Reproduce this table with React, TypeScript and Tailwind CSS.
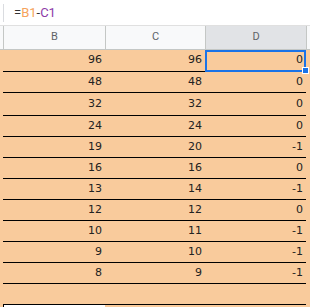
import React from 'react'

const ROWS: [number, number, number][] = [
  [96, 96, 0],
  [48, 48, 0],
  [32, 32, 0],
  [24, 24, 0],
  [19, 20, -1],
  [16, 16, 0],
  [13, 14, -1],
  [12, 12, 0],
  [10, 11, -1],
  [9, 10, -1],
  [8, 9, -1]
]

// row heights include the 1px black rule at the bottom
const HEIGHTS = ['h-[22px]', 'h-[21px]', 'h-[23px]', 'h-[21px]', 'h-[21px]', 'h-[21px]', 'h-[21px]', 'h-[21px]', 'h-[21px]', 'h-[21px]', 'h-[21px]']

const DataRow = ({ cells, h }: { cells: (number | null)[]; h: string }) => (
  <div className={`flex ${h} bg-[#f9cb9c]`}>
    <div className="w-[3px] shrink-0" />
    <div className="flex border-b border-black">
      <div className="flex justify-end items-center pr-[3px] w-[102px]">{cells[0]}</div>
      <div className="flex justify-end items-center pr-[3px] w-[100px]">{cells[1]}</div>
      <div className="flex justify-end items-center pr-[3px] w-[101px]">{cells[2]}</div>
    </div>
    <div className="flex-1" />
  </div>
)

export default function App() {
  return (
    <div className="relative bg-white w-[310px] h-[307px] overflow-hidden">
      {/* formula bar */}
      <div className="flex items-center border-[#e0e0e0] border-b h-[26px]">
        <div className="ml-[3px] bg-[#dadce0] w-px h-[18px]" />
        <div className="pl-[10px] text-[13px] text-[#333] font-['Roboto',sans-serif]">
          =<span className="text-[#f6a35c]">B1</span>-<span className="text-[#8e3aa8]">C1</span>
        </div>
      </div>

      {/* column headers */}
      <div className="flex border-[#c4c7c5] border-b h-[24px] text-[11px] text-[#5f6368] font-['Roboto',sans-serif]">
        <div className="bg-[#f8f9fa] w-[3px] shrink-0" />
        <div className="flex justify-center items-center bg-[#f8f9fa] border-[#c4c7c5] border-l w-[102px]">B</div>
        <div className="flex justify-center items-center bg-[#f8f9fa] border-[#c4c7c5] border-l w-[100px]">C</div>
        <div className="flex justify-center items-center bg-[#e1e3e6] border-[#c4c7c5] border-l w-[101px]">D</div>
        <div className="flex-1 bg-[#f8f9fa] border-[#c4c7c5] border-l" />
      </div>

      {/* data */}
      <div className="text-[11px] text-[#222] font-['DejaVu_Sans',sans-serif]">
        {ROWS.map((r, i) => (
          <DataRow key={i} cells={r} h={HEIGHTS[i]} />
        ))}
        <DataRow cells={[null, null, null]} h="h-[21px]" />
        <div className="flex bg-[#f9cb9c] h-[10px]">
          <div className="w-[3px] shrink-0" />
          <div className="bg-white border-black border-l w-[102px]" />
        </div>
      </div>

      {/* selection on D1 */}
      <div className="absolute top-[50px] left-[205px] border-2 border-[#1a73e8] w-[101px] h-[22px]" />
      <div className="absolute top-[67px] left-[302px] bg-[#1a73e8] border border-white w-[7px] h-[7px]" />
    </div>
  )
}
